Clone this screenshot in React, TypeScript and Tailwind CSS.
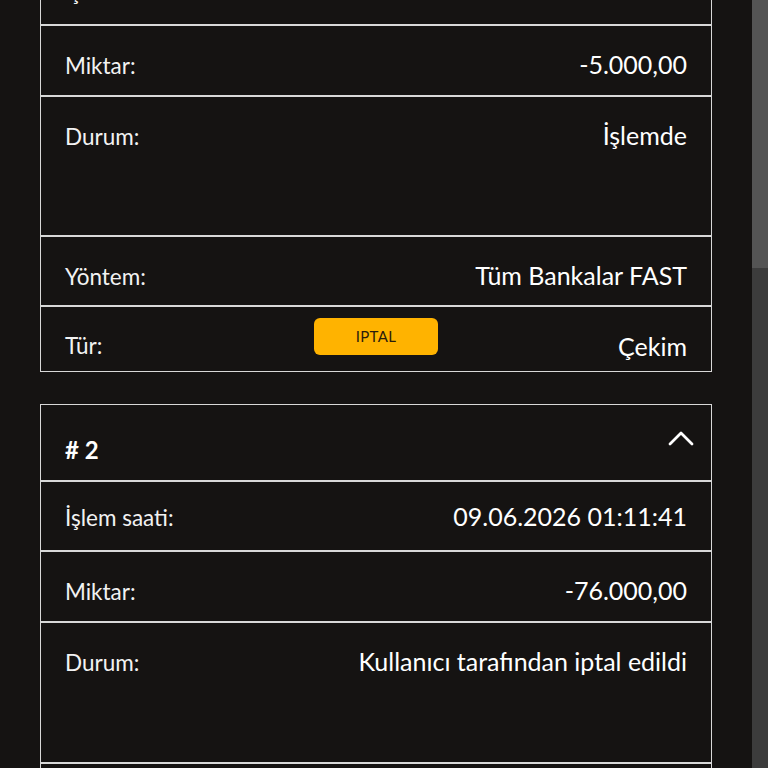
import React from 'react';

type Row = { label: string; value: string; h: string; pt?: string };

type Tx = {
  no: number;
  rows: Row[];
  type: string;
  cancellable?: boolean;
};

const txs: Tx[] = [
  {
    no: 1,
    rows: [
      { label: 'İşlem saati:', value: '09.06.2026 01:24:07', h: 'h-[70px]', pt: 'pt-[20px]' },
      { label: 'Miktar:', value: '-5.000,00', h: 'h-[71px]' },
      { label: 'Durum:', value: 'İşlemde', h: 'h-[140px]' },
      { label: 'Yöntem:', value: 'Tüm Bankalar FAST', h: 'h-[70px]' },
    ],
    type: 'Çekim',
    cancellable: true,
  },
  {
    no: 2,
    rows: [
      { label: 'İşlem saati:', value: '09.06.2026 01:11:41', h: 'h-[70px]', pt: 'pt-[20px]' },
      { label: 'Miktar:', value: '-76.000,00', h: 'h-[71px]' },
      { label: 'Durum:', value: 'Kullanıcı tarafından iptal edildi', h: 'h-[141px]' },
      { label: 'Yöntem:', value: 'Tüm Bankalar FAST', h: 'h-[70px]' },
    ],
    type: 'Çekim',
  },
];

function ChevronUp() {
  return (
    <svg width="26" height="16" viewBox="0 0 26 16" fill="none" className="mt-[25px] mr-[-7px]">
      <path d="M2 14 L13 3 L24 14" stroke="#ffffff" strokeWidth="2.8" strokeLinecap="round" strokeLinejoin="round" />
    </svg>
  );
}

function TxCard({ tx }: { tx: Tx }) {
  return (
    <div className="border border-[#d8d8d8]">
      {/* Header */}
      <div className="h-[75px] px-6 flex items-start justify-between">
        <span className="mt-[30px] text-[24px] leading-[30px] font-bold text-white"># {tx.no}</span>
        <ChevronUp />
      </div>

      {tx.rows.map((r) => (
        <div
          key={r.label}
          className={`${r.h} ${r.pt ?? 'pt-6'} border-t-2 border-[#d8d8d8] px-6 flex items-baseline justify-between`}
        >
          <span className="text-[22.5px] leading-[28px] text-[#f2f2f2]">{r.label}</span>
          <span className="text-[25px] leading-[28px] text-white text-right">{r.value}</span>
        </div>
      ))}

      {/* Tür row */}
      <div className="h-[66px] border-t-2 border-[#d8d8d8] px-6 pt-[11px] grid grid-cols-[1fr_auto_1fr] items-start">
        <span className="pt-[14px] text-[22.5px] leading-[28px] text-[#f2f2f2]">Tür:</span>
        {tx.cancellable ? (
          <button className="w-[124px] h-[37px] rounded-md bg-[#ffb300] text-[15px] text-[#2a1c0c] tracking-wide">
            IPTAL
          </button>
        ) : (
          <span />
        )}
        <span className="pt-[14px] text-[25px] leading-[28px] text-white text-right">{tx.type}</span>
      </div>
    </div>
  );
}

export default function App() {
  return (
    <div className="h-screen overflow-hidden flex bg-[#151312] font-['Lato',sans-serif]">
      <main className="flex-1 px-10">
        <div className="mt-[-122px] flex flex-col gap-8">
          {txs.map((tx) => (
            <TxCard key={tx.no} tx={tx} />
          ))}
        </div>
      </main>

      {/* Scrollbar */}
      <div className="w-4 bg-[#3c3c3c] flex flex-col">
        <div className="h-[268px] bg-[#545454]" />
      </div>
    </div>
  );
}
